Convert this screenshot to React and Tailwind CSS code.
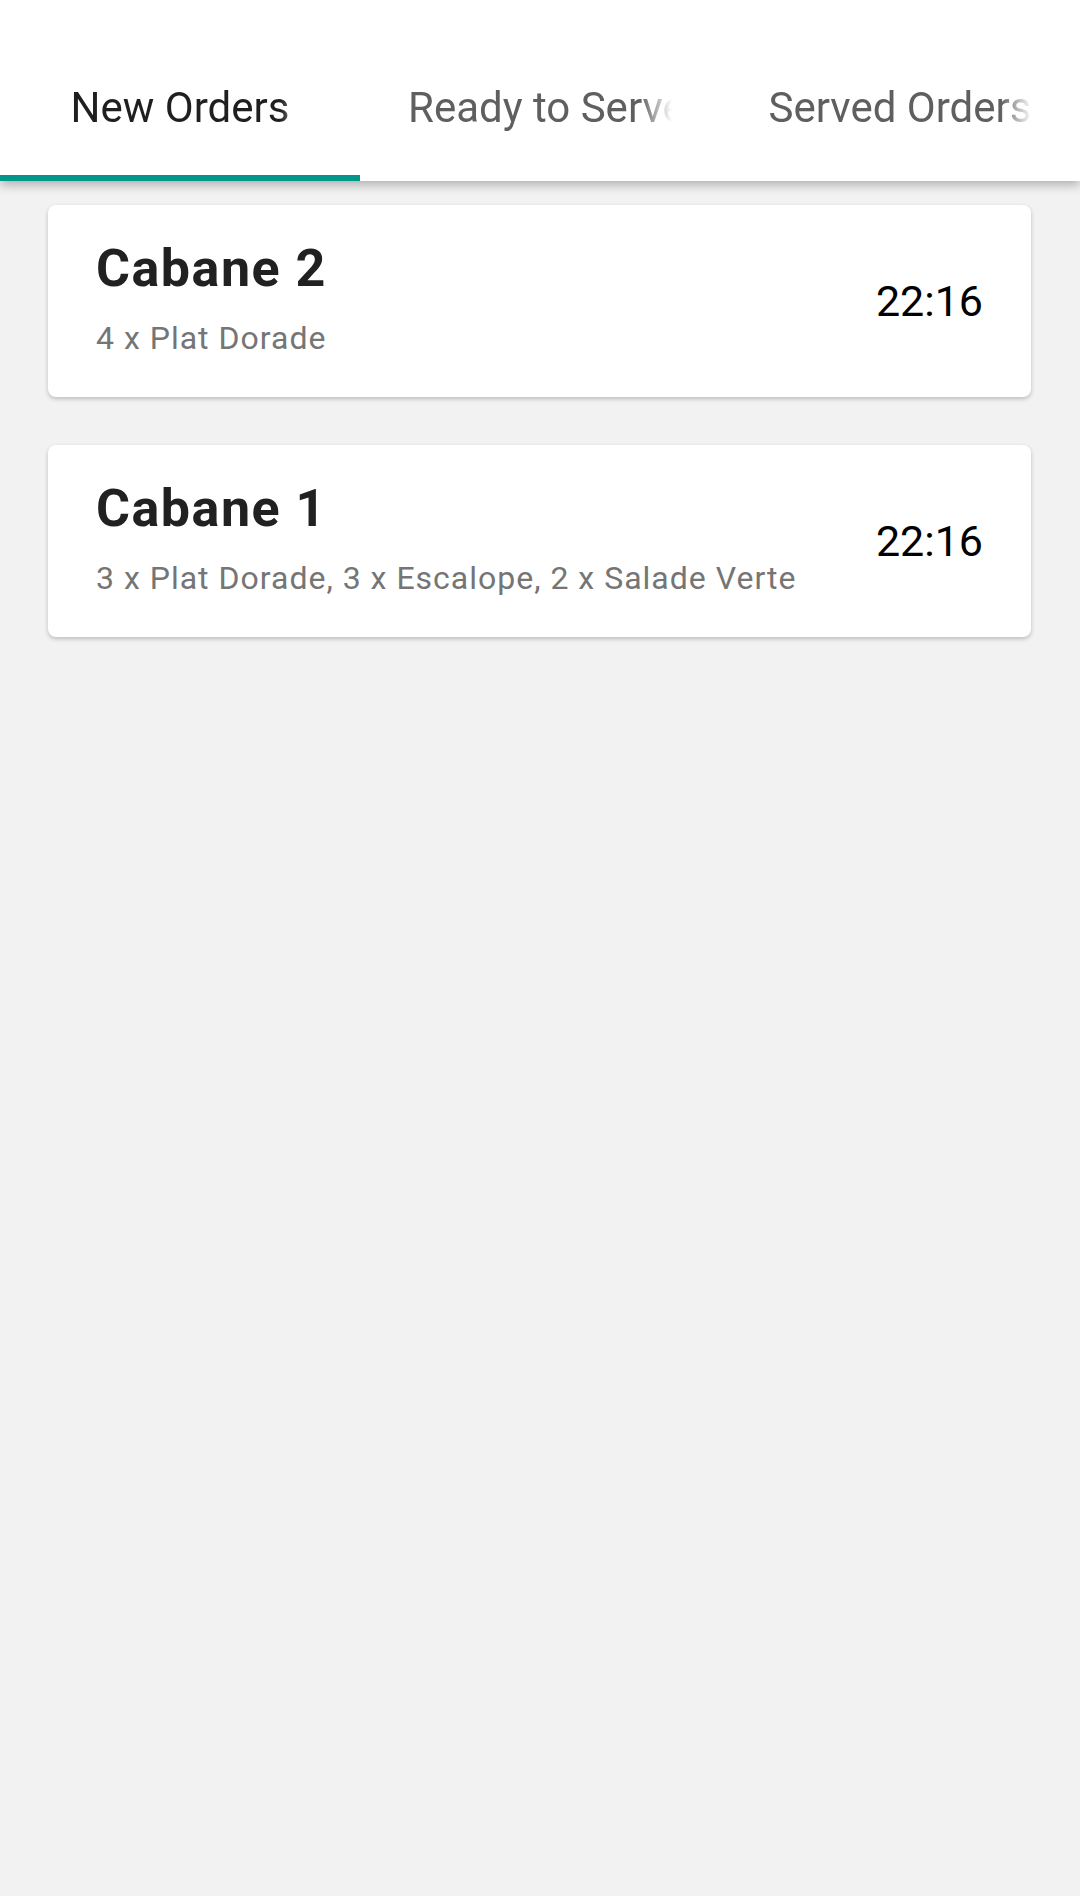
const tabs = [
  { label: "New Orders", active: true },
  { label: "Ready to Serve", active: false },
  { label: "Served Orders", active: false },
];

const orders = [
  { table: "Cabane 2", items: "4 x Plat Dorade", time: "22:16" },
  { table: "Cabane 1", items: "3 x Plat Dorade, 3 x Escalope, 2 x Salade Verte", time: "22:16" },
];

function Tab({ label, active }) {
  return (
    <div className="w-[360px] h-[181px] flex flex-col justify-between">
      <div className="pt-[83px] px-[48px]">
        <div
          className={`whitespace-nowrap overflow-hidden text-center text-[42px] leading-[50px] [mask-image:linear-gradient(to_right,#000_88%,transparent)] ${
            active ? "text-[#1f1f1f]" : "text-[#5f5f5f]"
          }`}
        >
          {label}
        </div>
      </div>
      <div className={`h-[6px] ${active ? "bg-[#009688]" : "bg-transparent"}`} />
    </div>
  );
}

function OrderCard({ table, items, time }) {
  return (
    <div className="h-[192px] bg-white rounded-[8px] shadow-[0_2px_4px_rgba(0,0,0,0.22)] px-[48px] flex items-center justify-between">
      <div className="flex flex-col pb-[7px]">
        <span className="text-[52px] leading-[62px] font-bold tracking-[1.5px] text-[#212121]">{table}</span>
        <span className="mt-[19px] text-[32px] leading-[38px] tracking-[1px] text-[#757575]">{items}</span>
      </div>
      <span className="text-[43px] leading-[54px] text-black">{time}</span>
    </div>
  );
}

export default function App() {
  return (
    <div className="min-h-[1896px] bg-[#f2f2f2] font-['Roboto',sans-serif]">
      <div className="relative z-10 bg-white flex shadow-[0_4px_10px_rgba(0,0,0,0.28)]">
        {tabs.map((t) => (
          <Tab key={t.label} {...t} />
        ))}
      </div>
      <div className="pt-[24px] pl-[48px] pr-[49px] flex flex-col gap-[48px]">
        {orders.map((o) => (
          <OrderCard key={o.table} {...o} />
        ))}
      </div>
    </div>
  );
}
